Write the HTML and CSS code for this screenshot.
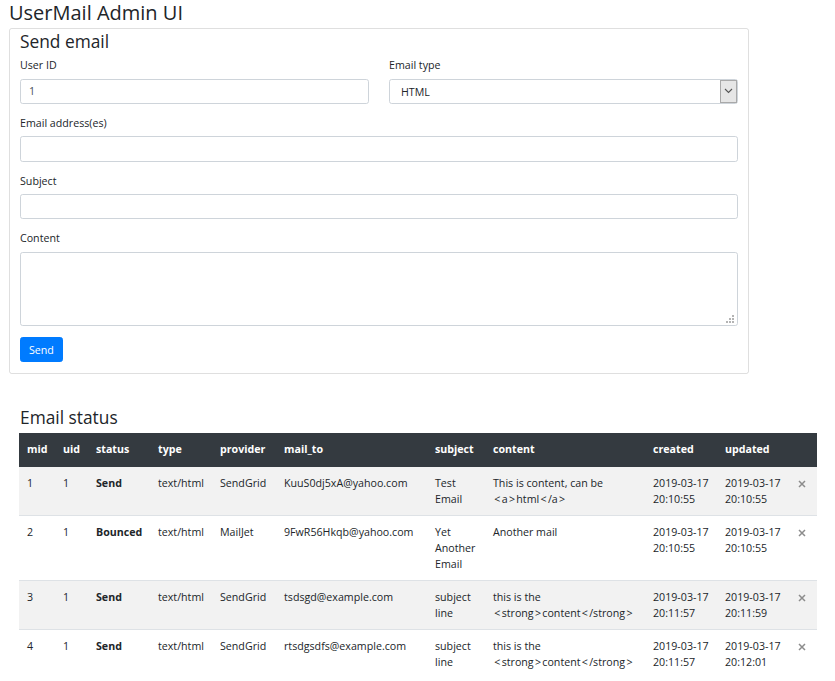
FILE: index.html
```html
<!DOCTYPE html>
<html lang="en">
<head>
<meta charset="utf-8">
<title>UserMail Admin UI</title>
<link rel="stylesheet" href="styles.css">
</head>
<body>
<div class="page">
  <h1 class="title">UserMail Admin UI</h1>
  <form class="card">
    <h3 class="card-title">Send email</h3>
    <div class="form-row">
      <div class="form-group">
        <label class="label">User ID</label>
        <input class="form-control" type="text" value="1">
      </div>
      <div class="form-group">
        <label class="label">Email type</label>
        <div class="select-wrap">
          <select class="form-control select"><option>HTML</option><option>Text</option></select>
          <span class="select-btn"><svg width="9" height="6" viewBox="0 0 9 6"><path d="M1 1 L4.5 4.5 L8 1" fill="none" stroke="#555" stroke-width="1.1"/></svg></span>
        </div>
      </div>
    </div>
    <div class="form-group">
      <label class="label">Email address(es)</label>
      <input class="form-control" type="text">
    </div>
    <div class="form-group">
      <label class="label">Subject</label>
      <input class="form-control" type="text">
    </div>
    <div class="form-group">
      <label class="label">Content</label>
      <div class="textarea-wrap">
        <textarea class="form-control textarea" rows="4"></textarea>
        <svg class="grip" width="9" height="9" viewBox="0 0 9 9"><g fill="#b4b4b4"><rect x="6" y="0" width="2" height="2"/><rect x="3" y="3" width="2" height="2"/><rect x="6" y="3" width="2" height="2"/><rect x="0" y="6" width="2" height="2"/><rect x="3" y="6" width="2" height="2"/><rect x="6" y="6" width="2" height="2"/></g></svg>
      </div>
    </div>
    <button class="btn" type="button">Send</button>
  </form>

  <section class="status">
    <h3 class="status-title">Email status</h3>
    <table class="table">
      <colgroup>
        <col class="c-mid"><col class="c-uid"><col class="c-status"><col class="c-type"><col class="c-provider"><col class="c-mailto"><col class="c-subject"><col class="c-content"><col class="c-created"><col class="c-updated"><col class="c-del">
      </colgroup>
      <thead>
        <tr><th>mid</th><th>uid</th><th>status</th><th>type</th><th>provider</th><th>mail_to</th><th>subject</th><th>content</th><th>created</th><th>updated</th><th></th></tr>
      </thead>
      <tbody>
        <tr>
          <td>1</td><td>1</td><td class="bold">Send</td><td>text/html</td><td>SendGrid</td><td>KuuS0dj5xA@yahoo.com</td><td>Test Email</td><td>This is content, can be <span class="ang">&lt;</span>a<span class="ang">&gt;</span>html<span class="ang">&lt;</span>/a<span class="ang">&gt;</span></td><td>2019-03-17 20:10:55</td><td>2019-03-17 20:10:55</td><td><svg class="del" width="8" height="8" viewBox="0 0 8 8"><path d="M1 1 L7 7 M7 1 L1 7" stroke="#8c8c8c" stroke-width="1.5"/></svg></td>
        </tr>
        <tr>
          <td>2</td><td>1</td><td class="bold">Bounced</td><td>text/html</td><td>MailJet</td><td>9FwR56Hkqb@yahoo.com</td><td>Yet Another Email</td><td>Another mail</td><td>2019-03-17 20:10:55</td><td>2019-03-17 20:10:55</td><td><svg class="del" width="8" height="8" viewBox="0 0 8 8"><path d="M1 1 L7 7 M7 1 L1 7" stroke="#8c8c8c" stroke-width="1.5"/></svg></td>
        </tr>
        <tr>
          <td>3</td><td>1</td><td class="bold">Send</td><td>text/html</td><td>SendGrid</td><td>tsdsgd@example.com</td><td>subject line</td><td>this is the <span class="ang">&lt;</span>strong<span class="ang">&gt;</span>content<span class="ang">&lt;</span>/strong<span class="ang">&gt;</span></td><td>2019-03-17 20:11:57</td><td>2019-03-17 20:11:59</td><td><svg class="del" width="8" height="8" viewBox="0 0 8 8"><path d="M1 1 L7 7 M7 1 L1 7" stroke="#8c8c8c" stroke-width="1.5"/></svg></td>
        </tr>
        <tr>
          <td>4</td><td>1</td><td class="bold">Send</td><td>text/html</td><td>SendGrid</td><td>rtsdgsdfs@example.com</td><td>subject line</td><td>this is the <span class="ang">&lt;</span>strong<span class="ang">&gt;</span>content<span class="ang">&lt;</span>/strong<span class="ang">&gt;</span></td><td>2019-03-17 20:11:57</td><td>2019-03-17 20:12:01</td><td><svg class="del" width="8" height="8" viewBox="0 0 8 8"><path d="M1 1 L7 7 M7 1 L1 7" stroke="#8c8c8c" stroke-width="1.5"/></svg></td>
        </tr>
      </tbody>
    </table>
  </section>
</div>
</body>
</html>
```

FILE: styles.css
```css
* { box-sizing: border-box; }
html, body { margin: 0; padding: 0; background: #fff; }
body {
  font-family: "Open Sans", "Noto Sans", sans-serif;
  font-size: 10.667px;
  line-height: 16px;
  color: #212529;
}
.page { padding: 2px 0 0 9px; }
.title, .card-title, .status-title {
  font-weight: 400;
  line-height: 22.4px;
  margin: 0 0 5.333px 0;
}
.title { font-size: 20px; margin-bottom: 3.333px; }
.card-title, .status-title { font-size: 17.333px; }
.card {
  width: 740px;
  border: 1px solid rgba(0,0,0,.125);
  border-radius: 2.667px;
  padding: 1px 10px 10.667px 10px;
  margin: 0;
}
.form-row {
  display: grid;
  grid-template-columns: 1fr 1fr;
  column-gap: 20px;
}
.form-group { margin-bottom: 11px; }
.label { display: block; margin-bottom: 5.333px; }
.form-control {
  display: block;
  width: 100%;
  height: 25.333px;
  padding: 4px 8px;
  font-family: inherit;
  font-size: 10.667px;
  line-height: 16px;
  color: #495057;
  background: #fff;
  border: 1px solid #ced4da;
  border-radius: 2.667px;
  margin: 0;
}
.textarea-wrap { position: relative; }
.textarea { height: 74px; resize: none; }
.grip { position: absolute; right: 3px; bottom: 2px; }
.select-wrap { position: relative; }
.select { appearance: none; -webkit-appearance: none; padding-left: 11px; color: #212529; }
.select-btn {
  position: absolute;
  top: 1px; right: 1px;
  width: 17px; height: 23.333px;
  background: #e6e6e6;
  border: 1px solid #a9a9a9;
  display: flex; align-items: center; justify-content: center;
  pointer-events: none;
}
.btn {
  display: inline-block;
  height: 25.333px;
  padding: 4px 8px;
  font-family: inherit;
  font-size: 10.667px;
  line-height: 16px;
  color: #fff;
  background: #007bff;
  border: 1px solid #007bff;
  border-radius: 2.667px;
}
.status { margin-top: 32px; }
.status-title { margin-left: 11px; }
.table {
  margin-left: 10px;
  width: 798px;
  table-layout: fixed;
  border-collapse: collapse;
}
.c-mid { width: 36px; }
.c-uid { width: 33px; }
.c-status { width: 62px; }
.c-type { width: 62px; }
.c-provider { width: 64px; }
.c-mailto { width: 151px; }
.c-subject { width: 58px; }
.c-content { width: 160px; }
.c-created { width: 72px; }
.c-updated { width: 73px; }
.c-del { width: 27px; }
.table th, .table td {
  padding: 8px;
  text-align: left;
  vertical-align: top;
  border-top: 1px solid #dee2e6;
}
.table thead th {
  background: #343a40;
  color: #fff;
  font-weight: 700;
  border-top: 0;
  border-bottom: 2px solid #343a40;
}
.table tbody tr:first-child td { border-top: 0; }
.table tbody tr:nth-child(odd) { background: #f2f2f2; }
.bold { font-weight: 700; }
.ang { padding: 0 1.3px; }
.del { display: block; margin-top: 5px; }
```
